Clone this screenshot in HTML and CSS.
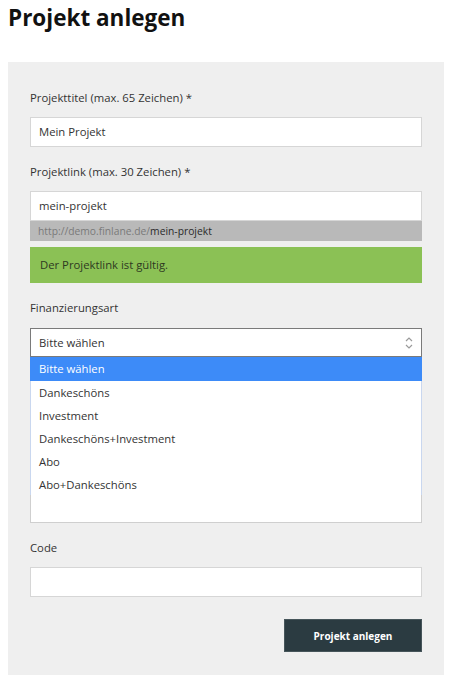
FILE: index.html
```html
<!DOCTYPE html>
<html lang="de">
<head>
<meta charset="utf-8">
<link rel="stylesheet" href="styles.css">
</head>
<body>
<h1 class="title">Projekt anlegen</h1>
<form class="panel">
  <div class="field">
    <label class="label">Projekttitel (max. 65 Zeichen) *</label>
    <div class="input">Mein Projekt</div>
  </div>
  <div class="field">
    <label class="label">Projektlink (max. 30 Zeichen) *</label>
    <div class="input">mein-projekt</div>
    <div class="url">http://demo.finlane.de/<span class="url-slug">mein-projekt</span></div>
    <div class="valid">Der Projektlink ist gültig.</div>
  </div>
  <div class="field">
    <label class="label label-select">Finanzierungsart</label>
    <div class="select">
      <span>Bitte wählen</span>
      <svg class="arrows" width="8" height="14" viewBox="0 0 8 14"><path d="M1 5 L4 2 L7 5" fill="none" stroke="#9a9a9a" stroke-width="1.2"/><path d="M1 9 L4 12 L7 9" fill="none" stroke="#9a9a9a" stroke-width="1.2"/></svg>
    </div>
    <div class="listbox">
      <div class="opt opt-active">Bitte wählen</div>
      <div class="opts">
        <div class="opt">Dankeschöns</div>
        <div class="opt">Investment</div>
        <div class="opt">Dankeschöns+Investment</div>
        <div class="opt">Abo</div>
        <div class="opt">Abo+Dankeschöns</div>
      </div>
    </div>
  </div>
  <div class="field">
    <label class="label">Code</label>
    <div class="input"></div>
  </div>
  <div class="actions">
    <button type="button" class="btn">Projekt anlegen</button>
  </div>
</form>
</body>
</html>
```

FILE: styles.css
```css
html, body {
  margin: 0;
  padding: 0;
  background: #ffffff;
}
body {
  font-family: "Open Sans", "Noto Sans", sans-serif;
  color: #333333;
  padding-left: 8px;
}
.title {
  margin: 0;
  padding-top: 3px;
  font-size: 22.5px;
  line-height: 30px;
  font-weight: 700;
  color: #111111;
  height: 62px;
  box-sizing: border-box;
}
.panel {
  width: 436px;
  box-sizing: border-box;
  background: #efefef;
  padding: 27px 22px 23px 22px;
  display: flex;
  flex-direction: column;
  gap: 16px;
}
.field {
  display: flex;
  flex-direction: column;
}
.label {
  font-size: 11.3px;
  line-height: 18px;
  color: #333333;
  margin-bottom: 10px;
}
.label-select {
  margin-bottom: 11px;
}
.input {
  height: 30px;
  box-sizing: border-box;
  background: #ffffff;
  border: 1px solid #d6d6d6;
  font-size: 11.3px;
  line-height: 28px;
  padding-left: 8px;
  color: #333333;
}
.url {
  height: 20px;
  background: #b9b9b9;
  font-size: 10.3px;
  line-height: 20px;
  padding-left: 8px;
  color: #7a7a7a;
}
.url-slug {
  color: #2a2a2a;
}
.valid {
  margin-top: 6px;
  height: 36px;
  background: #8bc155;
  font-size: 11.3px;
  line-height: 36px;
  padding-left: 10px;
  color: #2e3a22;
}
.select {
  height: 29px;
  box-sizing: border-box;
  background: #ffffff;
  border: 1px solid #7a7a7a;
  font-size: 11.3px;
  padding: 0 8px 0 8px;
  display: flex;
  align-items: center;
  justify-content: space-between;
  color: #333333;
}
.arrows {
  display: block;
}
.listbox {
  height: 166px;
  box-sizing: border-box;
  background: #ffffff;
  border: 1px solid #cfcfcf;
  border-top: none;
}
.opts {
  height: 114px;
  border-left: 1px solid #c9d7ef;
  border-right: 1px solid #c9d7ef;
  margin: 0 -1px;
}
.opt {
  height: 23px;
  font-size: 11.3px;
  line-height: 23px;
  padding-left: 8px;
  color: #333333;
}
.opt-active {
  height: 24px;
  line-height: 24px;
  background: #3d8bf8;
  color: #ffffff;
  margin: 0 -1px;
  padding-left: 9px;
}
.actions {
  display: flex;
  justify-content: flex-end;
  padding-top: 6px;
}
.btn {
  width: 138px;
  height: 33px;
  background: #2b3b41;
  border: 1px solid #46555a;
  color: #ffffff;
  font-family: "Open Sans", "Noto Sans", sans-serif;
  font-size: 10px;
  font-weight: 700;
  cursor: pointer;
}
```
